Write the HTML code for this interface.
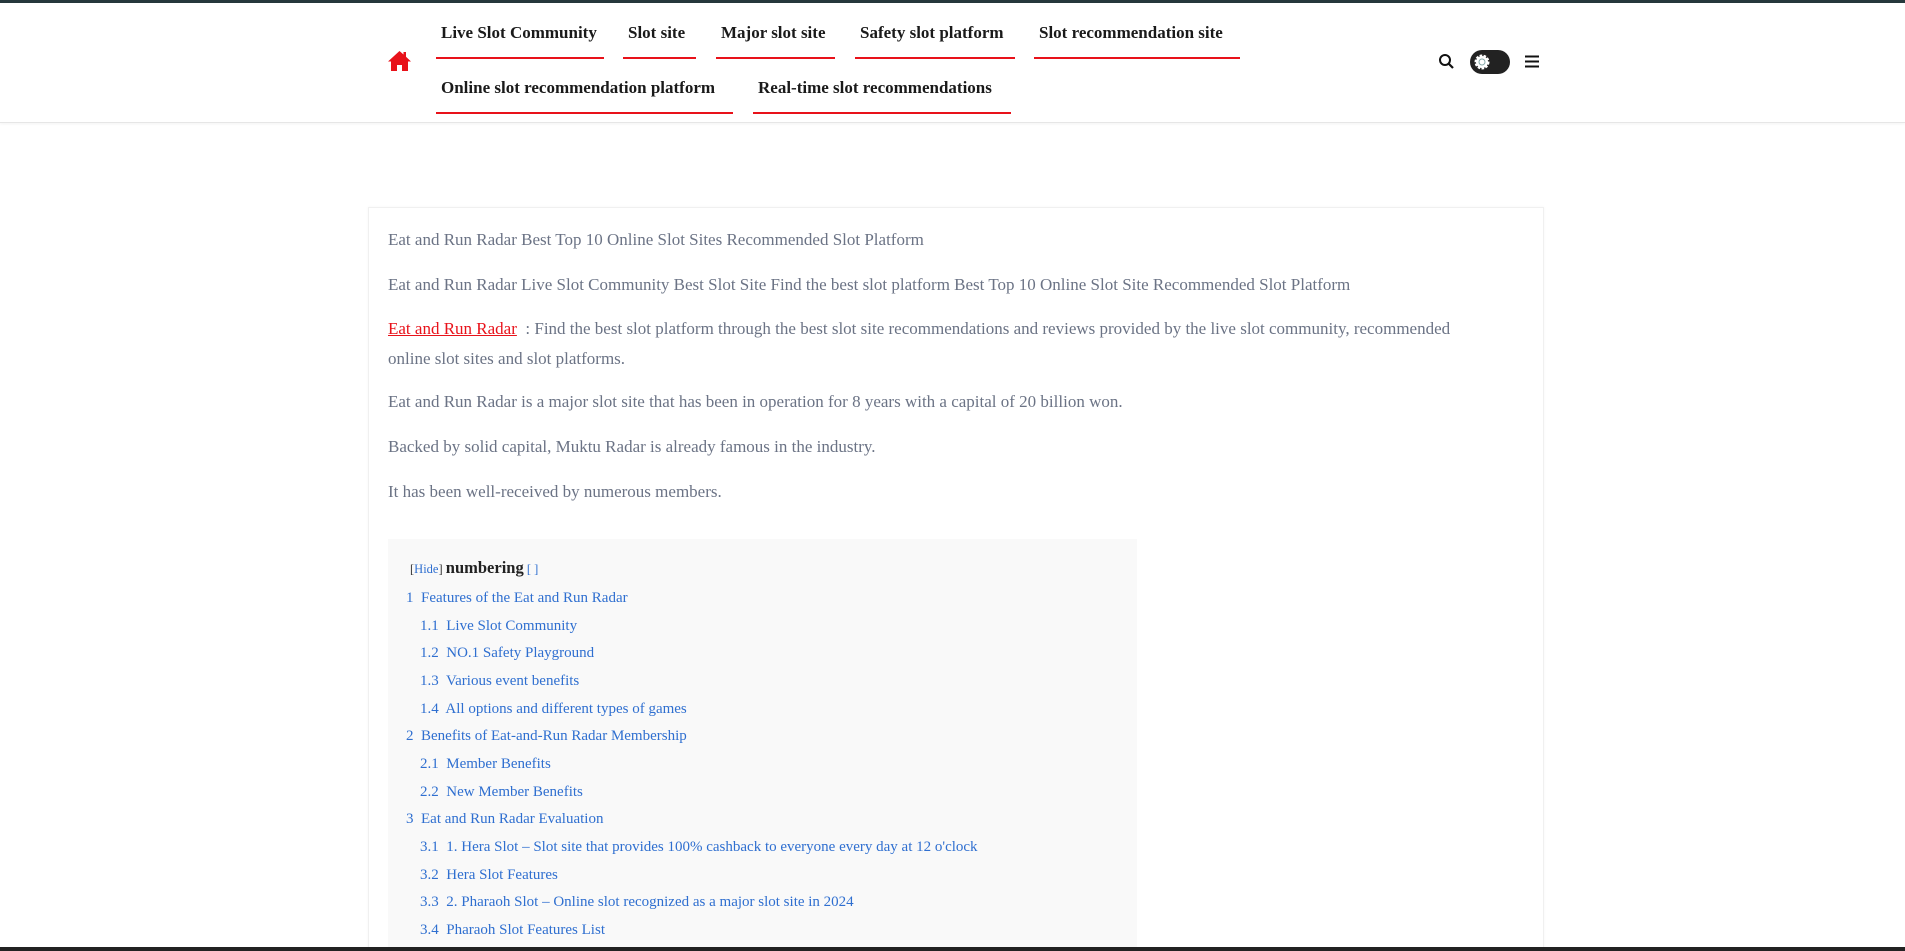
<!DOCTYPE html>
<html><head><meta charset="utf-8"><style>
*{margin:0;padding:0;box-sizing:border-box}
html,body{width:1905px;height:951px;overflow:hidden}
body{background:#fff;font-family:"Liberation Serif",serif;position:relative}
.top{position:absolute;left:0;top:0;width:1905px;height:3px;background:#26383c}
.hdr{position:absolute;left:0;top:3px;width:1905px;height:120px;background:#fff;border-bottom:1px solid #e6e6e6;box-shadow:0 1px 3px rgba(0,0,0,.05)}
.nav{position:absolute;height:39px;border-bottom:2px solid #e8121a;font-weight:bold;font-size:17px;color:#1a1a1a;white-space:nowrap;padding-left:5px;line-height:26px}
.box{position:absolute;left:368px;top:207px;width:1176px;height:750px;border:1px solid #f0f0f0;box-shadow:0 0 3px rgba(0,0,0,.04)}
.p{position:absolute;left:388px;font-size:17px;color:#6b7385;white-space:nowrap}
.toc{position:absolute;left:388px;top:539px;width:749px;height:420px;background:#f9f9f9}
.t{position:absolute;font-size:15px;color:#2f6fd0;white-space:nowrap}
.bot{position:absolute;left:0;top:947px;width:1905px;height:4px;background:#222}
</style></head><body>
<div class="top"></div>
<div class="hdr"></div>
<svg style="position:absolute;left:387px;top:50px" width="25" height="22" viewBox="0 0 25 22"><path d="M12.5 1 L1 11.5 L4 11.5 L4 21 L10 21 L10 15 L15 15 L15 21 L21 21 L21 11.5 L24 11.5 L19 6.8 L19 2 L16.5 2 L16.5 4.5 Z" fill="#e8121a"/></svg>
<div class="nav" style="left:436px;top:20px;width:168px">Live Slot Community</div>
<div class="nav" style="left:623px;top:20px;width:73px">Slot site</div>
<div class="nav" style="left:716px;top:20px;width:119px">Major slot site</div>
<div class="nav" style="left:855px;top:20px;width:160px">Safety slot platform</div>
<div class="nav" style="left:1034px;top:20px;width:206px">Slot recommendation site</div>
<div class="nav" style="left:436px;top:75px;width:297px">Online slot recommendation platform</div>
<div class="nav" style="left:753px;top:75px;width:258px">Real-time slot recommendations</div>
<svg style="position:absolute;left:1438px;top:53px" width="17" height="17" viewBox="0 0 17 17"><circle cx="7" cy="7" r="5" fill="none" stroke="#111" stroke-width="2"/><path d="M10.5 10.5 L15 15" stroke="#111" stroke-width="2.2"/></svg>
<div style="position:absolute;left:1470px;top:50px;width:40px;height:24px;border-radius:12px;background:#222"></div>
<svg style="position:absolute;left:1473px;top:53px" width="18" height="18" viewBox="0 0 18 18"><circle cx="9" cy="9" r="6" fill="#fff" stroke="#fff" stroke-width="3" stroke-dasharray="2.4 1.3"/><circle cx="9" cy="9" r="3" fill="none" stroke="#8aa" stroke-width="1"/></svg>
<svg style="position:absolute;left:1525px;top:55px" width="14" height="13" viewBox="0 0 14 13"><path d="M0 1.5H14M0 6.5H14M0 11.5H14" stroke="#111" stroke-width="2"/></svg>
<div class="box"></div>
<div class="p" style="top:230px">Eat and Run Radar Best Top 10 Online Slot Sites Recommended Slot Platform</div>
<div class="p" style="top:275px">Eat and Run Radar Live Slot Community Best Slot Site Find the best slot platform Best Top 10 Online Slot Site Recommended Slot Platform</div>
<div class="p" style="top:319px"><span style="color:#e8121a;text-decoration:underline">Eat and Run Radar</span> &nbsp;: Find the best slot platform through the best slot site recommendations and reviews provided by the live slot community, recommended</div>
<div class="p" style="top:349px">online slot sites and slot platforms.</div>
<div class="p" style="top:392px">Eat and Run Radar is a major slot site that has been in operation for 8 years with a capital of 20 billion won.</div>
<div class="p" style="top:437px">Backed by solid capital, Muktu Radar is already famous in the industry.</div>
<div class="p" style="top:482px">It has been well-received by numerous members.</div>
<div class="toc"></div>
<div class="t" style="left:410px;top:558px;font-size:12.5px;color:#2f6fd0"><span style="color:#333">[</span>Hide<span style="color:#333">]</span> <span style="font-size:16.5px;font-weight:bold;color:#222">numbering</span> [ ]</div>
<div class="t" style="left:406px;top:590px">1&nbsp; Features of the Eat and Run Radar</div>
<div class="t" style="left:420px;top:618px">1.1&nbsp; Live Slot Community</div>
<div class="t" style="left:420px;top:645px">1.2&nbsp; NO.1 Safety Playground</div>
<div class="t" style="left:420px;top:673px">1.3&nbsp; Various event benefits</div>
<div class="t" style="left:420px;top:701px">1.4&nbsp; All options and different types of games</div>
<div class="t" style="left:406px;top:728px">2&nbsp; Benefits of Eat-and-Run Radar Membership</div>
<div class="t" style="left:420px;top:756px">2.1&nbsp; Member Benefits</div>
<div class="t" style="left:420px;top:784px">2.2&nbsp; New Member Benefits</div>
<div class="t" style="left:406px;top:811px">3&nbsp; Eat and Run Radar Evaluation</div>
<div class="t" style="left:420px;top:839px">3.1&nbsp; 1. Hera Slot – Slot site that provides 100% cashback to everyone every day at 12 o'clock</div>
<div class="t" style="left:420px;top:867px">3.2&nbsp; Hera Slot Features</div>
<div class="t" style="left:420px;top:894px">3.3&nbsp; 2. Pharaoh Slot – Online slot recognized as a major slot site in 2024</div>
<div class="t" style="left:420px;top:922px">3.4&nbsp; Pharaoh Slot Features List</div>
<div class="bot"></div>
</body></html>
